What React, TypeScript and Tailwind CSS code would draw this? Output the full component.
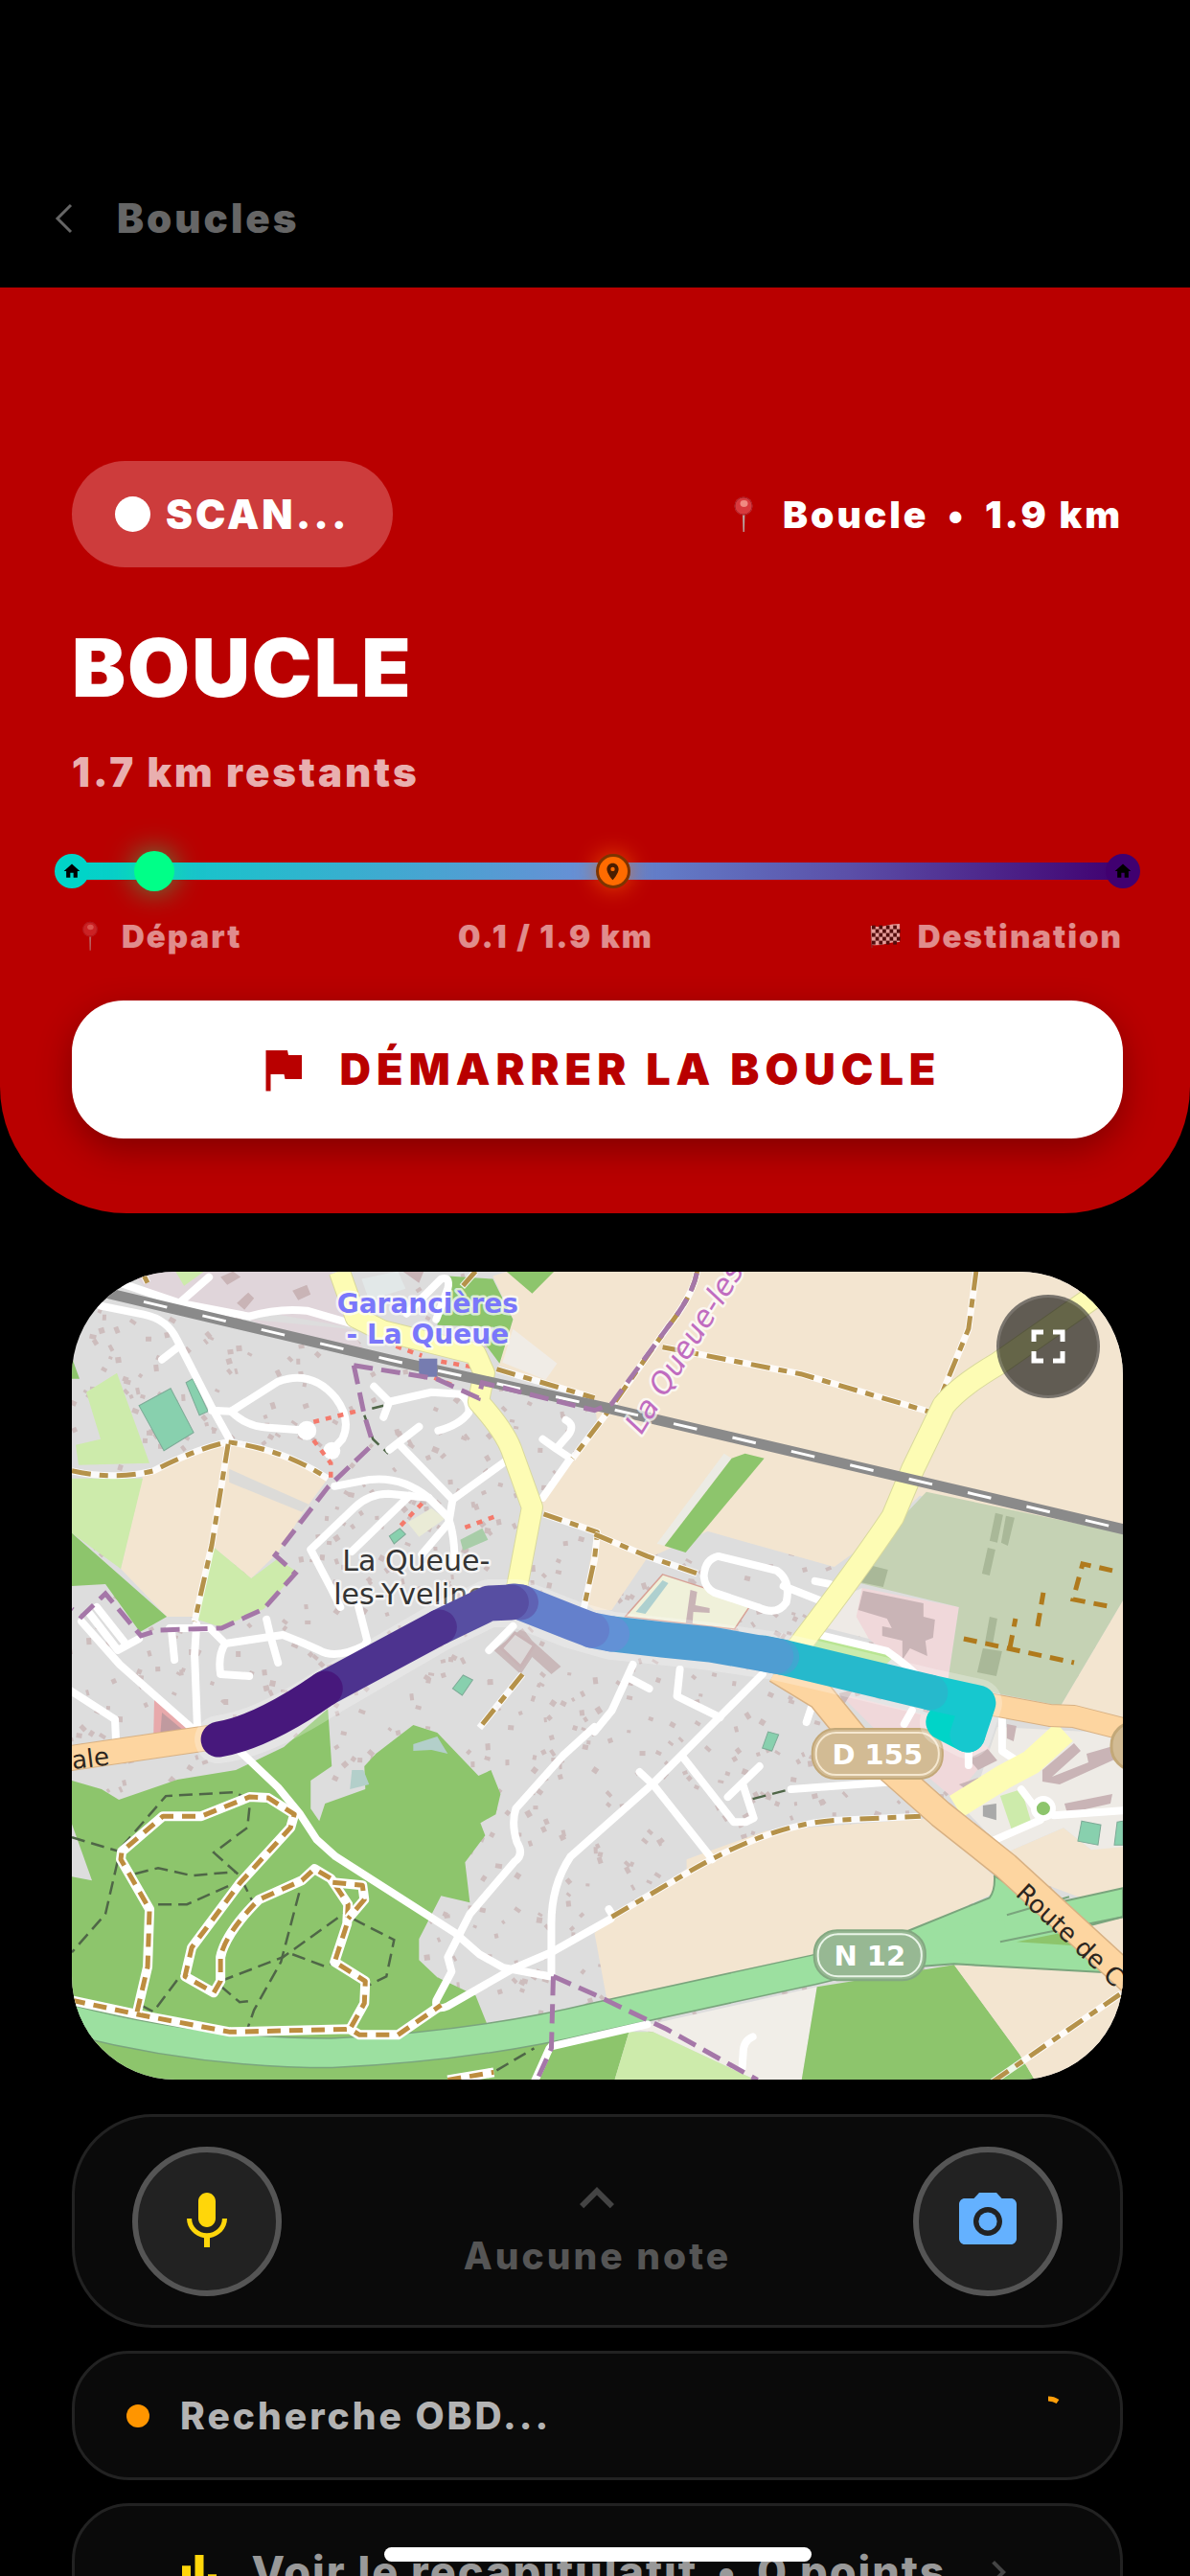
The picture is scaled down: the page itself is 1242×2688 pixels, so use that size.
import type { FC, ReactNode } from "react";
import {
  MdBarChart,
  MdCameraAlt,
  MdChevronRight,
  MdFlag,
  MdFullscreen,
  MdHome,
  MdKeyboardArrowUp,
  MdMic,
  MdPlace,
} from "react-icons/md";

type LineProps = {
  d: string;
};

type MarkerProps = {
  className?: string;
  children?: ReactNode;
};

const PinIcon: FC<{ className?: string }> = ({ className = "" }) => (
  <svg className={className} viewBox="0 0 22 38" aria-hidden="true">
    <path d="M10 18h2.4l-.5 19h-1.4z" fill="#b9a5a2" />
    <circle cx="11" cy="10" r="9.5" fill="#d8393d" />
    <circle cx="11" cy="10" r="9" fill="none" stroke="#a81f26" strokeWidth="1" />
    <ellipse cx="11.5" cy="7.5" rx="4" ry="3.4" fill="#f08a82" />
  </svg>
);

const CheckeredFlag: FC<{ className?: string }> = ({ className = "" }) => (
  <svg className={className} viewBox="0 0 32 26" aria-hidden="true">
    <path d="M1 2l1 23" stroke="#8a3030" strokeWidth="1.5" />
    <path d="M1 2q8 2 15 0t15-2v19q-8 0-15 2t-14 1z" fill="#f0c4c0" />
    {[0, 1, 2, 3, 4].map((row) =>
      [0, 1, 2, 3].map((col) => (
        <rect
          key={`${row}-${col}`}
          x={2 + col * 7.4 + (row % 2) * 3.7}
          y={1.6 + row * 4}
          width="3.7"
          height="4"
          fill="#3a0f10"
        />
      ))
    )}
  </svg>
);

const Marker: FC<MarkerProps> = ({ className = "", children }) => (
  <div
    className={`absolute top-1/2 -translate-x-1/2 -translate-y-1/2 rounded-full flex items-center justify-center ${className}`}
  >
    {children}
  </div>
);

const Street: FC<LineProps> = ({ d }) => (
  <path d={d} fill="none" stroke="#fff" strokeWidth="8" strokeLinecap="round" strokeLinejoin="round" />
);

const Track: FC<LineProps> = ({ d }) => (
  <g fill="none" strokeLinejoin="round">
    <path d={d} stroke="#fff" strokeOpacity="0.85" strokeWidth="7" />
    <path d={d} stroke="#b5924a" strokeWidth="5" strokeDasharray="20 9 9 9" />
  </g>
);

const ForestTrack: FC<LineProps> = ({ d }) => (
  <g fill="none" strokeLinejoin="round">
    <path d={d} stroke="#fff" strokeWidth="10" />
    <path d={d} stroke="#bd8d3f" strokeWidth="5" strokeDasharray="14 9" />
  </g>
);

const Footpath: FC<LineProps> = ({ d }) => (
  <path d={d} fill="none" stroke="#4f6647" strokeWidth="2.5" strokeDasharray="14 7" />
);

const Boundary: FC<LineProps> = ({ d }) => (
  <path d={d} fill="none" stroke="#a577a8" strokeWidth="5" strokeDasharray="20 9" />
);

const Cycleway: FC<LineProps> = ({ d }) => (
  <path d={d} fill="none" stroke="#f47a6c" strokeWidth="4.5" strokeDasharray="6 7" />
);

// small houses scattered over the residential area
const houses = (() => {
  let seed = 7;
  const next = () => {
    seed = (seed * 1103515245 + 12345) % 2147483648;
    return seed / 2147483648;
  };
  return Array.from({ length: 1700 }, () => ({
    x: Math.round(next() * 1096),
    y: Math.round(next() * 800),
    w: 4 + Math.round(next() * 3),
    h: 3 + Math.round(next() * 3),
    r: Math.round(next() * 90),
  }));
})();

const streets = [
  "M0 -4L50 12L112 33L185 47Q215 38 245 41L300 57",
  "M112 33L143 6",
  "M30 36L75 45Q100 50 110 72L146 142L166 178",
  "M112 78L94 92",
  "M146 145L166 146L215 115Q250 102 275 132Q292 155 282 175L272 186",
  "M166 146Q182 162 205 163L245 166",
  "M315 120L331 136L325 152M331 136L375 126L405 128Q415 134 414 147Q405 160 382 166",
  "M331 186L362 162M341 180L397 238L455 196",
  "M274 224L300 219Q340 210 372 236L392 256Q400 275 399 310",
  "M372 236L330 232Q310 232 295 246L249 290L270 330L280 350",
  "M352 234L292 292M397 238L393 262L365 295",
  "M515 155Q525 160 518 170L505 185L491 175M505 185L520 195L491 236",
  "M299 350L308 385L305 390Q275 405 258 395L240 387L220 379L160 388L144 372L130 372L102 372",
  "M203 363L207 380L215 408M160 388Q152 400 155 420L185 422",
  "M104 375L107 405M130 368L128 400L131 480",
  "M18 356L48 395L70 383M10 365L50 410L135 485",
  "M26 350L56 388",
  "M0 438L45 467L46 490",
  "M175 500L215 538L238 566L255 592L275 610L400 690L425 712L450 726L498 735",
  "M545 475L512 505L463 560Q458 575 464 595Q472 608 462 615L415 670L392 715L396 730L380 760Q378 772 392 766L460 727L500 710L562 675",
  "M500 735L500 680Q500 640 520 610L605 535L720 420",
  "M560 665L563 670",
  "M545 480L563 458L585 410M583 425L602 435",
  "M634 415L631 443L676 465",
  "M592 522L606 535L668 613",
  "M636 505L690 574L703 574L711 570L700 536M684 548L717 516",
  "M750 540L860 532",
  "M771 455L766 470",
  "M876 458L868 472",
  "M659 318Q660 300 674 297L735 312Q750 322 745 345Q735 360 715 350L670 335Q660 330 659 318Z",
  "M742 328L785 345M775 323L790 326",
  "M775 378L850 396Q870 410 880 420",
  "M970 466L970 500L985 510M935 500L935 515",
  "M990 540L1005 560M955 596L1010 572M1024 567L1096 562",
  "M498 810L480 850M500 808L600 785",
  "M710 798Q700 802 700 815L699 830",
  "M349 44L385 8Q395 5 392 18L380 50",
  "M435 395L460 370",
];

const tracks = [
  "M0 208Q45 218 85 208Q130 185 162 178Q220 185 267 216",
  "M163 180L146 285L128 365",
  "M70 -6L79 12",
  "M421 0L407 16",
  "M443 102L545 132",
  "M652 0Q648 25 620 60L560 145Q545 165 522 195",
  "M492 253L548 272L545 300L533 355",
  "M545 274L600 297L652 315",
  "M616 79L760 107L893 146",
  "M943 0L935 60L905 133",
  "M563 673L640 628Q730 575 800 572L885 568",
  "M960 845L1094 753",
  "M470 420L425 476",
];

// unpaved paths inside the cemetery
const innerPaths = [
  "M930 383L1045 408",
  "M978 393L984 362",
  "M1007 370L1013 335",
  "M1085 312L1054 305L1044 342L1080 349",
];

const forestTracks = [
  "M0 760L70 775L165 793L290 790L300 796L340 796L385 765",
  "M68 772L79 725L81 665L51 613L52 605L95 568L135 568L185 548L205 549L232 566L228 580L175 638L125 705L118 735L148 752L155 740L155 715Q160 690 195 655L240 635L253 623L270 633L288 660L287 680L274 720L306 740L305 763L290 790",
  "M272 637L303 640L305 655L288 675",
  "M392 843L440 835",
];

const footpaths = [
  "M0 590L50 605L35 670L0 710",
  "M52 600L98 547L170 543L186 552L183 580L148 606L175 630L190 660",
  "M66 628L90 622L125 630L170 626",
  "M90 660L120 660L165 640",
  "M237 648L218 720L190 770L183 790",
  "M155 740L220 715L290 665",
  "M72 765L85 772L118 728M155 745L175 762L190 760",
  "M230 712L265 725L274 720M293 675L336 697L328 735L308 745",
  "M443 833L482 810M710 550L745 541M313 143L325 140M305 150L314 175L330 190",
];

const boundaries = [
  "M294 98L380 112L424 132L428 116L545 145L563 138L620 60Q648 25 652 0",
  "M294 98L305 150L312 173M310 184L267 225L212 296L233 315L200 352L156 372L90 374L72 380L35 336L10 360L0 352",
  "M502 735L500 810L485 843M502 735L545 754L620 790L715 843",
];

const cycleways = [
  "M252 157L300 145",
  "M252 176L270 200V215",
  "M343 265L366 241",
  "M410 267L440 256",
  "M338 78L365 88M385 94L420 100",
  "M366 106L400 120",
];

const TownMap: FC = () => (
  <svg
    className="block h-full w-full"
    viewBox="0 0 1096 843"
    preserveAspectRatio="xMidYMid slice"
    role="img"
    aria-label="Carte de la boucle"
  >
    <rect width="1096" height="843" fill="#dddddd" />
    <g fill="#cdbdbd">
      {houses.map((h, i) => (
        <rect key={i} x={h.x} y={h.y} width={h.w} height={h.h} transform={`rotate(${h.r} ${h.x} ${h.y})`} />
      ))}
    </g>

    {/* industrial and retail */}
    <g fill="#e0d5da">
      <path d="M60 0H271L299 60L215 45L150 48L80 20Z" />
      <path d="M185 50L290 60L306 84L214 64Z" />
    </g>
    <g fill="#c9b4b6">
      <path d="M155 6L168 0L176 6L162 14ZM172 33L184 22L190 28L180 40ZM230 20L245 14L249 24L236 30ZM345 0H367L362 12Z" />
    </g>
    <path d="M302 8L340 0L348 18L310 30Z" fill="#e2e8e8" />

    {/* farmland */}
    <g fill="#f3e5d0">
      <path d="M74 213L121 190L164 178L213 190L267 216L242 250L215 293L187 320L146 286L128 360L99 360L51 310Z" />
      <path d="M439 5L455 0H1096V290L884 234L841 275L795 308L663 271L599 300L563 353H545L533 345L545 275L492 252L489 235L548 160L545 135L445 98L460 50Z" />
      <path d="M1096 343L1031 453L1096 468Z" />
      <path d="M545 690L563 673L641 623V613L724 583L895 570L961 630L962 648L881 686L774 715L558 760Z" />
      <path d="M974 606L1034 580L1063 603L1096 596V643L1052 653L999 633Z" />
    </g>
    <path d="M164 206L247 243L240 251L164 220Z" fill="#dcdbd8" />
    <path d="M460 60L506 96L494 113L449 95Z" fill="#f0ece6" />
    <path d="M618 286L610 284L680 190L688 195Z" fill="#ecebe4" />

    {/* grass */}
    <g fill="#cdebab">
      <path d="M108 0H138L117 15Z" />
      <path d="M15 126L47 106L81 200L7 202L4 181L30 175Z" />
      <path d="M0 216H74L51 310L0 273Z" />
      <path d="M146 286L187 320L214 300L235 313L200 352L156 371L131 363Z" />
    </g>

    {/* woods */}
    <g fill="#8dc56c">
      <path d="M0 273L99 360L71 376L35 326L0 328ZM0 90L8 112H0Z" />
      <path d="M392 5L439 8L460 50L446 96L431 76L440 58L381 56ZM453 0H503L480 23Z" />
      <path d="M618 286L688 195L702 190L722 195L640 293Z" />
      <path d="M0 531L31 540L49 551L110 530L171 520L221 496L267 456L271 516L249 531V560L258 573L264 555L306 540L305 516L317 503L356 473L381 481L424 526L437 520L447 545L442 566L426 575L431 588L410 616L415 658L385 651L362 696V718L381 736L421 755L433 785L545 770L581 793L566 843H0Z" />
    </g>
    <path d="M0 576L21 635L0 631Z" fill="#dddddd" />
    <path d="M356 493L381 485L392 503L375 499L356 500ZM292 520H304L310 535L290 540Z" fill="#b3cfca" />

    {/* sports grounds */}
    <g fill="#88d0ae" stroke="#7dab97" strokeWidth="1">
      <path d="M70 140L103 122L127 168L96 187ZM119 116L126 112L142 146L133 150Z" />
      <path d="M331 276L342 268L348 274L336 284ZM397 435L408 421L418 426L407 442ZM720 497L726 480L737 483L730 500Z" />
    </g>
    <path d="M405 280L428 268L434 280L408 291Z" fill="#a8cda8" />
    <path d="M350 262L375 247L389 258L362 277Z" fill="#eaebd6" />

    {/* school, shops and the estate to the east */}
    <path d="M616 316L709 346L691 373L577 360Z" fill="#f0f1da" stroke="#d7a196" strokeWidth="1.5" />
    <path d="M616 322L622 325L598 357L588 355Z" fill="#aed0cf" />
    <path d="M645 332L652 334L650 348L665 351V356L648 355L647 370L640 368Z" fill="#c9b4b6" />
    <path d="M780 350L824 330L831 383L780 370Z" fill="#eeeae6" />
    <path d="M824 330L925 350L913 430L877 423L831 383L818 360Z" fill="#f0d8da" />
    <path d="M825 333L888 346V360L900 363L898 382L890 385L892 401L874 393L866 405V385L845 380V370L855 372L850 362L820 353Z" fill="#c9b4b6" />
    <path d="M774 380L859 400L849 410L766 393Z" fill="#b9e592" />
    <path d="M891 230L1096 273V343L1031 453L913 430L925 350L822 325L841 283Z" fill="#c5d2b4" />
    <g fill="#a9b898">
      <path d="M963 252L971 254L965 283L957 281ZM974 255L983 257L976 286L969 283ZM955 288L963 290L957 317L949 315ZM835 307L851 311L846 329L822 324ZM957 360L965 362L960 390L952 388ZM950 393L970 396L964 422L944 418Z" />
    </g>
    <g fill="none" stroke="#b07a1c" strokeWidth="5" strokeDasharray="14 9">
      {innerPaths.map((d) => (
        <path key={d} d={d} />
      ))}
    </g>
    <path d="M800 440L920 470L960 500L920 550L860 500Z" fill="#f0d8da" />
    <path d="M965 475L1096 482V600L1063 603L1034 580L974 606L935 565Z" fill="#eeebe6" />
    <g fill="#c9b4b6">
      <path d="M1012 520L1045 492L1052 500L1022 527L1060 512L1058 503L1096 492V505L1030 535L1012 532ZM1035 555L1085 545L1083 555L1038 565ZM925 535L945 528L960 535L940 545ZM935 508L955 498L965 510L945 520ZM975 472L985 474L982 490L975 487Z" />
      <path d="M440 395L470 372L480 385L510 412L500 420L480 402L468 420ZM800 440L815 436L805 452Z" fill="#c9b8b9" />
    </g>
    <path d="M448 393L462 377L482 390L468 412Z" fill="#dcd8d8" stroke="#c9b4b6" strokeWidth="3" />
    <path d="M968 547L990 540L1000 573L980 582Z" fill="#cdebab" />
    <path d="M950 557L964 555V572L950 568Z" fill="#a9a9a9" />
    <path d="M1053 573L1073 577L1070 598L1049 594ZM1090 574L1096 573V598H1087Z" fill="#88d0ae" stroke="#7dab97" />
    <path d="M86 444L135 485L130 492L85 490Z" fill="#e8a9ab" />
    <path d="M94 460L118 480L92 486Z" fill="#c09a9f" />

    {/* south of the trunk road */}
    <path d="M581 790L777 746L761 843H713L606 793Z" fill="#f1eee8" />
    <path d="M581 793L606 793L713 843H566Z" fill="#cdebab" />
    <path d="M777 746L920 723L988 816L1004 843H761Z" fill="#8dc56c" />
    <path d="M920 723L1074 731L1096 746V843H1004L988 816Z" fill="#f3e5d0" />
    <path d="M1052 683L1096 673V740Z" fill="#f3e5d0" />

    {/* trunk road */}
    <g fill="none" strokeLinejoin="round">
      <path d="M-10 778Q130 815 271 815Q420 808 545 778L774 728L866 706L974 690" stroke="#7aa57d" strokeWidth="32" />
      <path
        d="M866 690L957 653Q963 645 962 630L1010 662L1096 643V673L1030 690L1080 731L920 722L840 728Z"
        fill="#9ce0a0"
        stroke="#7aa57d"
        strokeWidth="2"
      />
      <path d="M-10 778Q130 815 271 815Q420 808 545 778L774 728L866 706L974 690" stroke="#9ce0a0" strokeWidth="29" />
      <path d="M975 671L1040 652M968 699L1096 673" stroke="#7aa57d" strokeWidth="2" />
      <path d="M985 699L1030 690L1046 703Z" fill="#8dc56c" />
    </g>

    {footpaths.map((d) => (
      <Footpath key={d} d={d} />
    ))}
    <g>
      {streets.map((d) => (
        <Street key={d} d={d} />
      ))}
      <circle cx="245" cy="166" r="10" fill="#fff" />
      <circle cx="271" cy="187" r="9" fill="#fff" />
      <circle cx="1013" cy="560" r="10" fill="#8dc56c" stroke="#fff" strokeWidth="6" />
    </g>
    {tracks.map((d) => (
      <Track key={d} d={d} />
    ))}
    {forestTracks.map((d) => (
      <ForestTrack key={d} d={d} />
    ))}
    {cycleways.map((d) => (
      <Cycleway key={d} d={d} />
    ))}

    {/* secondary and primary roads */}
    <g fill="none" strokeLinejoin="round">
      <path d="M279 0L296 48L324 62L421 86L430 106L424 136Q450 165 458 185L480 246L464 330" stroke="#d9d99c" strokeWidth="23" />
      <path d="M279 0L296 48L324 62L421 86L430 106L424 136Q450 165 458 185L480 246L464 330" stroke="#fdfcb4" strokeWidth="21" />
      <path d="M1075 20L966 96Q925 120 909 140L877 206L856 256Q820 310 755 395" stroke="#d9d99c" strokeWidth="25" />
      <path d="M1075 20L966 96Q925 120 909 140L877 206L856 256Q820 310 755 395" stroke="#fdfcb4" strokeWidth="23" />
      <path d="M1035 480L1000 512L970 528L922 558" stroke="#fdfcb4" strokeWidth="26" />
      <path d="M735 415L781 443L816 486L906 566L974 620L1105 740" stroke="#d8b183" strokeWidth="30" />
      <path d="M735 415L781 443L816 486L906 566L974 620L1105 740" stroke="#fdd5a0" strokeWidth="27" />
      <path d="M950 450L1020 463L1045 464L1100 478" stroke="#d8b183" strokeWidth="24" />
      <path d="M950 450L1020 463L1045 464L1100 478" stroke="#fdd5a0" strokeWidth="22" />
      <path d="M-5 508L145 486" stroke="#d8b183" strokeWidth="27" />
      <path d="M-5 508L145 486" stroke="#fdd5a0" strokeWidth="25" />
    </g>

    {/* railway */}
    <g fill="none">
      <path d="M0 14L330 92L560 143L1110 272" stroke="#8a8a8a" strokeWidth="11" />
      <path d="M0 14L330 92L560 143L1110 272" stroke="#fff" strokeWidth="3" strokeDasharray="25 38" strokeDashoffset="-14" />
    </g>
    <rect x="362" y="91" width="19" height="19" fill="#767cb0" />
    {boundaries.map((d) => (
      <Boundary key={d} d={d} />
    ))}

    {/* place names */}
    <g
      fontFamily="'DejaVu Sans', sans-serif"
      fontSize="28"
      stroke="#fff"
      strokeOpacity="0.7"
      strokeWidth="5"
      paintOrder="stroke"
      strokeLinejoin="round"
    >
      <g fill="#7a77fb" fontWeight="700" textAnchor="middle">
        <text x="371" y="43">Garancières</text>
        <text x="371" y="75">- La Queue</text>
      </g>
      <g fill="#333" fontSize="30">
        <text x="282" y="312">La Queue-</text>
        <text x="273" y="347">les-Yvelines</text>
      </g>
      <text x="0" y="0" fill="#c06cc0" fontStyle="italic" fontSize="31" transform="translate(594 171) rotate(-58)">
        La Queue-les
      </text>
    </g>
    <g fontFamily="'DejaVu Sans', sans-serif" fontSize="26" fill="#2c2620">
      <text transform="translate(1 519) rotate(-7)">ale</text>
      <text transform="translate(983 650) rotate(43)">Route de C</text>
    </g>
    <g fontFamily="'DejaVu Sans', sans-serif" fontSize="29" fontWeight="700" fill="#fff" textAnchor="middle">
      <rect x="772" y="477" width="136" height="52" rx="24" fill="#d2bb94" stroke="#c3a878" strokeWidth="2" />
      <rect x="776" y="481" width="128" height="44" rx="21" fill="none" stroke="#f5e8d0" strokeWidth="2" />
      <text x="840" y="514">D 155</text>
      <rect x="774" y="687" width="116" height="52" rx="24" fill="#97b893" stroke="#83a881" strokeWidth="2" />
      <rect x="778" y="691" width="108" height="44" rx="21" fill="none" stroke="#eaf5e8" strokeWidth="2" />
      <text x="832" y="724">N 12</text>
      <rect x="1084" y="470" width="60" height="50" rx="24" fill="#d2bb94" stroke="#c3a878" strokeWidth="3" />
    </g>

    {/* recorded loop */}
    <g fill="none" strokeLinecap="round" strokeLinejoin="round" strokeWidth="37">
      <path
        d="M153 488Q199 482 264 440L383 371L435 346H465L521 368L563 380L666 391L734 401L774 410L895 439L945 450L934 483L909 470"
        stroke="#fff"
        strokeOpacity="0.25"
        strokeWidth="50"
      />
      <path d="M909 470L934 483" stroke="#00d4c8" />
      <path d="M934 483L945 450L895 439" stroke="#16c8cf" />
      <path d="M895 439L774 410L740 402" stroke="#26b9cc" />
      <path d="M740 402L720 398" stroke="#3fa8d0" />
      <path d="M734 401L666 389L616 384L563 378" stroke="#4f9dd2" />
      <path d="M563 378L542 374" stroke="#6291d6" />
      <path d="M542 374L521 366L468 345" stroke="#6480cc" />
      <path d="M468 345L460 344" stroke="#5f62b4" />
      <path d="M458 345L435 346L383 371" stroke="#574ea2" />
      <path d="M383 371L264 435" stroke="#4d338f" />
      <path d="M264 435Q199 480 153 488" stroke="#47187c" />
    </g>
  </svg>
);

const App: FC = () => {
  return (
    <div className="relative h-screen overflow-hidden bg-black text-white font-['Inter',sans-serif]">
      <header className="h-[300px] pt-[156px] px-[54px]">
        <button className="flex items-center gap-[44px] h-[144px] text-[42px] leading-[50px] font-black tracking-[3px] text-[#666]">
          <svg className="h-[36px] w-[24px]" viewBox="0 0 24 36" fill="none" aria-hidden="true">
            <path d="M20 4L6 18L20 32" stroke="currentColor" strokeWidth="3" />
          </svg>
          Boucles
        </button>
      </header>

      <section className="rounded-b-[132px] bg-[#b90000] pl-[75px] pr-[70px] pt-[181px] pb-[78px]">
        <div className="flex items-center justify-between">
          <div className="flex items-center gap-[16px] h-[111px] rounded-full bg-[#cd3c3c] px-[45px] text-[42px] leading-[50px] font-black tracking-[3px]">
            <span className="h-[37px] w-[37px] rounded-full bg-white" />
            SCAN...
          </div>
          <div className="flex items-center text-[39px] leading-[48px] font-black tracking-[3px]">
            <PinIcon className="mr-[30px] h-[38px] w-[22px]" />
            Boucle<span className="mx-[20px]">•</span>1.9 km
          </div>
        </div>
        <h1 className="mt-[55px] text-[84px] leading-[100px] font-black tracking-[2px]">BOUCLE</h1>
        <p className="mt-[34px] text-[42px] leading-[50px] font-black tracking-[3px] text-white/70">
          1.7 km restants
        </p>

        <div className="relative mt-[57px] flex h-[42px] items-center">
          <div className="h-[18px] w-full bg-[linear-gradient(90deg,#00d4c8_0%,#6690d5_48%,#5b4fa8_74%,#400070_100%)]" />
          <Marker className="left-0 h-[36px] w-[36px] bg-[#00d4c8] text-black">
            <MdHome size={20} />
          </Marker>
          <Marker className="left-[7.8%] h-[42px] w-[42px] bg-[#00ff88] shadow-[0_0_30px_rgba(0,255,136,0.6)]" />
          <Marker className="left-[51.5%] h-[36px] w-[36px] border-[3px] border-[#7d3400] bg-[#ff6b00] text-[#4a1d00] shadow-[0_0_24px_rgba(255,107,0,0.7)]">
            <MdPlace size={21} />
          </Marker>
          <Marker className="left-full h-[36px] w-[36px] bg-[#400070] text-black">
            <MdHome size={20} />
          </Marker>
        </div>

        <div className="mt-[27px] flex items-center justify-between text-[33px] leading-[40px] font-black tracking-[2px] text-white/55">
          <span className="flex items-center">
            <PinIcon className="ml-[10px] mr-[24px] h-[32px] w-[18px] opacity-60" />
            Départ
          </span>
          <span>0.1 / 1.9 km</span>
          <span className="flex items-center">
            <CheckeredFlag className="mr-[18px] h-[26px] w-[32px] opacity-80" />
            Destination
          </span>
        </div>

        <button className="mt-[47px] flex h-[144px] w-full items-center justify-center gap-[30px] rounded-[54px] bg-white text-[45px] leading-[54px] font-black tracking-[6px] text-[#b90000] shadow-[0_12px_36px_rgba(0,0,0,0.3)]">
          <MdFlag size={60} />
          DÉMARRER LA BOUCLE
        </button>
      </section>

      <main className="flex flex-col pl-[75px] pr-[70px] pt-[61px]">
        <div className="relative h-[843px] overflow-hidden rounded-[108px]">
          <TownMap />
          <button
            aria-label="Plein écran"
            className="absolute top-[24px] right-[24px] flex h-[108px] w-[108px] items-center justify-center rounded-full border-[3px] border-white/15 bg-black/60 text-white"
          >
            <MdFullscreen size={60} />
          </button>
        </div>

        <div className="mt-[36px] flex h-[223px] items-center justify-between rounded-[84px] border-[3px] border-[#222] bg-[#0a0a0a] px-[60px]">
          <button
            aria-label="Note vocale"
            className="flex h-[156px] w-[156px] items-center justify-center rounded-full border-[6px] border-[#555] bg-[#222] text-[#ffd60a]"
          >
            <MdMic size={72} />
          </button>
          <button className="flex flex-col items-center text-[39px] leading-[48px] font-extrabold tracking-[3px] text-[#555]">
            <MdKeyboardArrowUp size={72} className="text-[#444]" />
            Aucune note
          </button>
          <button
            aria-label="Photo"
            className="flex h-[156px] w-[156px] items-center justify-center rounded-full border-[6px] border-[#555] bg-[#222] text-[#64b1ff]"
          >
            <MdCameraAlt size={72} />
          </button>
        </div>

        <div className="mt-[24px] flex h-[135px] items-center rounded-[60px] border-[3px] border-[#222] bg-[#0a0a0a] px-[54px] text-[39px] leading-[48px] font-extrabold tracking-[3px] text-[#b3b3b3]">
          <span className="mr-[32px] h-[24px] w-[24px] rounded-full bg-[#ff9500]" />
          Recherche OBD...
          <svg className="ml-auto h-[42px] w-[42px]" viewBox="0 0 42 42" fill="none" aria-hidden="true">
            <path d="M21 3A18 18 0 0 1 31 6" stroke="#ff9f0a" strokeWidth="5" />
          </svg>
        </div>

        <button className="mt-[24px] flex h-[144px] items-center justify-center rounded-[60px] border-[3px] border-[#222] bg-[#0a0a0a] text-[45px] leading-[54px] font-extrabold tracking-[2px] text-[#999]">
          <MdBarChart size={54} className="mr-[27px] text-[#ffd60a]" />
          Voir le récapitulatif<span className="mx-[20px]">•</span>0 points
          <MdChevronRight size={48} className="ml-[30px] text-[#444]" />
        </button>
      </main>

      <div className="absolute inset-x-0 bottom-[15px] flex justify-center pl-[75px] pr-[70px]">
        <div className="h-[15px] w-[446px] rounded-full bg-white" />
      </div>
    </div>
  );
};

export default App;
